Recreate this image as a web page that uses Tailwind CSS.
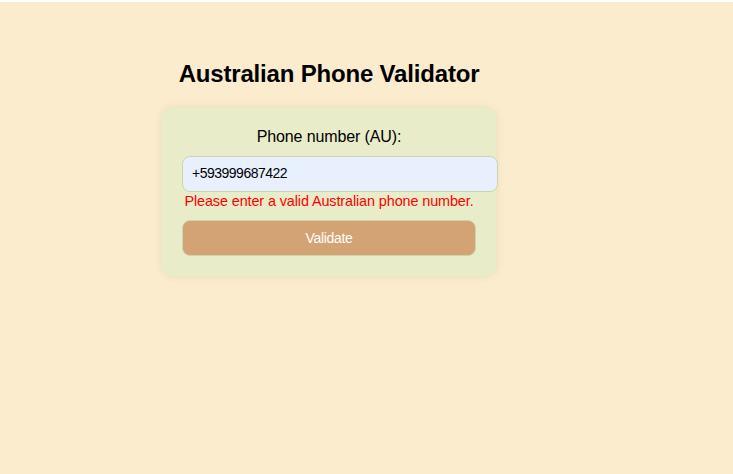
<!DOCTYPE html>
<html lang="en">
<head>
<meta charset="utf-8">
<title>Australian Phone Validator</title>
<script src="https://cdn.jsdelivr.net/npm/@tailwindcss/browser@4"></script>
</head>
<body class="min-h-screen border-t-2 border-white bg-[#faeccd] font-['Liberation_Sans',Arial,sans-serif] text-black">
<main class="ml-[162px] w-[334px] pt-[57px]">
<h1 class="text-center text-[24px] leading-[30px] font-bold tracking-[-0.18px] whitespace-nowrap">Australian Phone Validator</h1>
<form class="mt-[19px] h-[168px] rounded-[10px] bg-[#e8ecc9] px-5 pt-[19px] shadow-[0_0_10px_rgba(0,0,0,0.08)]">
<label for="phone" class="block text-center text-[16px] leading-[19px] tracking-[-0.12px]">Phone number (AU):</label>
<input id="phone" type="text" value="+593999687422" class="mt-[10px] block h-[36px] w-[316px] rounded-[8px] border border-[#ccd5ae] bg-[#e8f0fe] px-[9px] pb-[2px] text-[14px] tracking-[-0.5px]">
<p class="text-center text-[14.4px] leading-[19px] tracking-[-0.1px] whitespace-nowrap text-[#ff0000]">Please enter a valid Australian phone number.</p>
<button type="button" class="mt-[9px] block h-[36px] w-full rounded-[8px] border border-[#ccd5ae] bg-[#d4a373] text-[14px] tracking-[-0.3px] text-white">Validate</button>
</form>
</main>
</body>
</html>
